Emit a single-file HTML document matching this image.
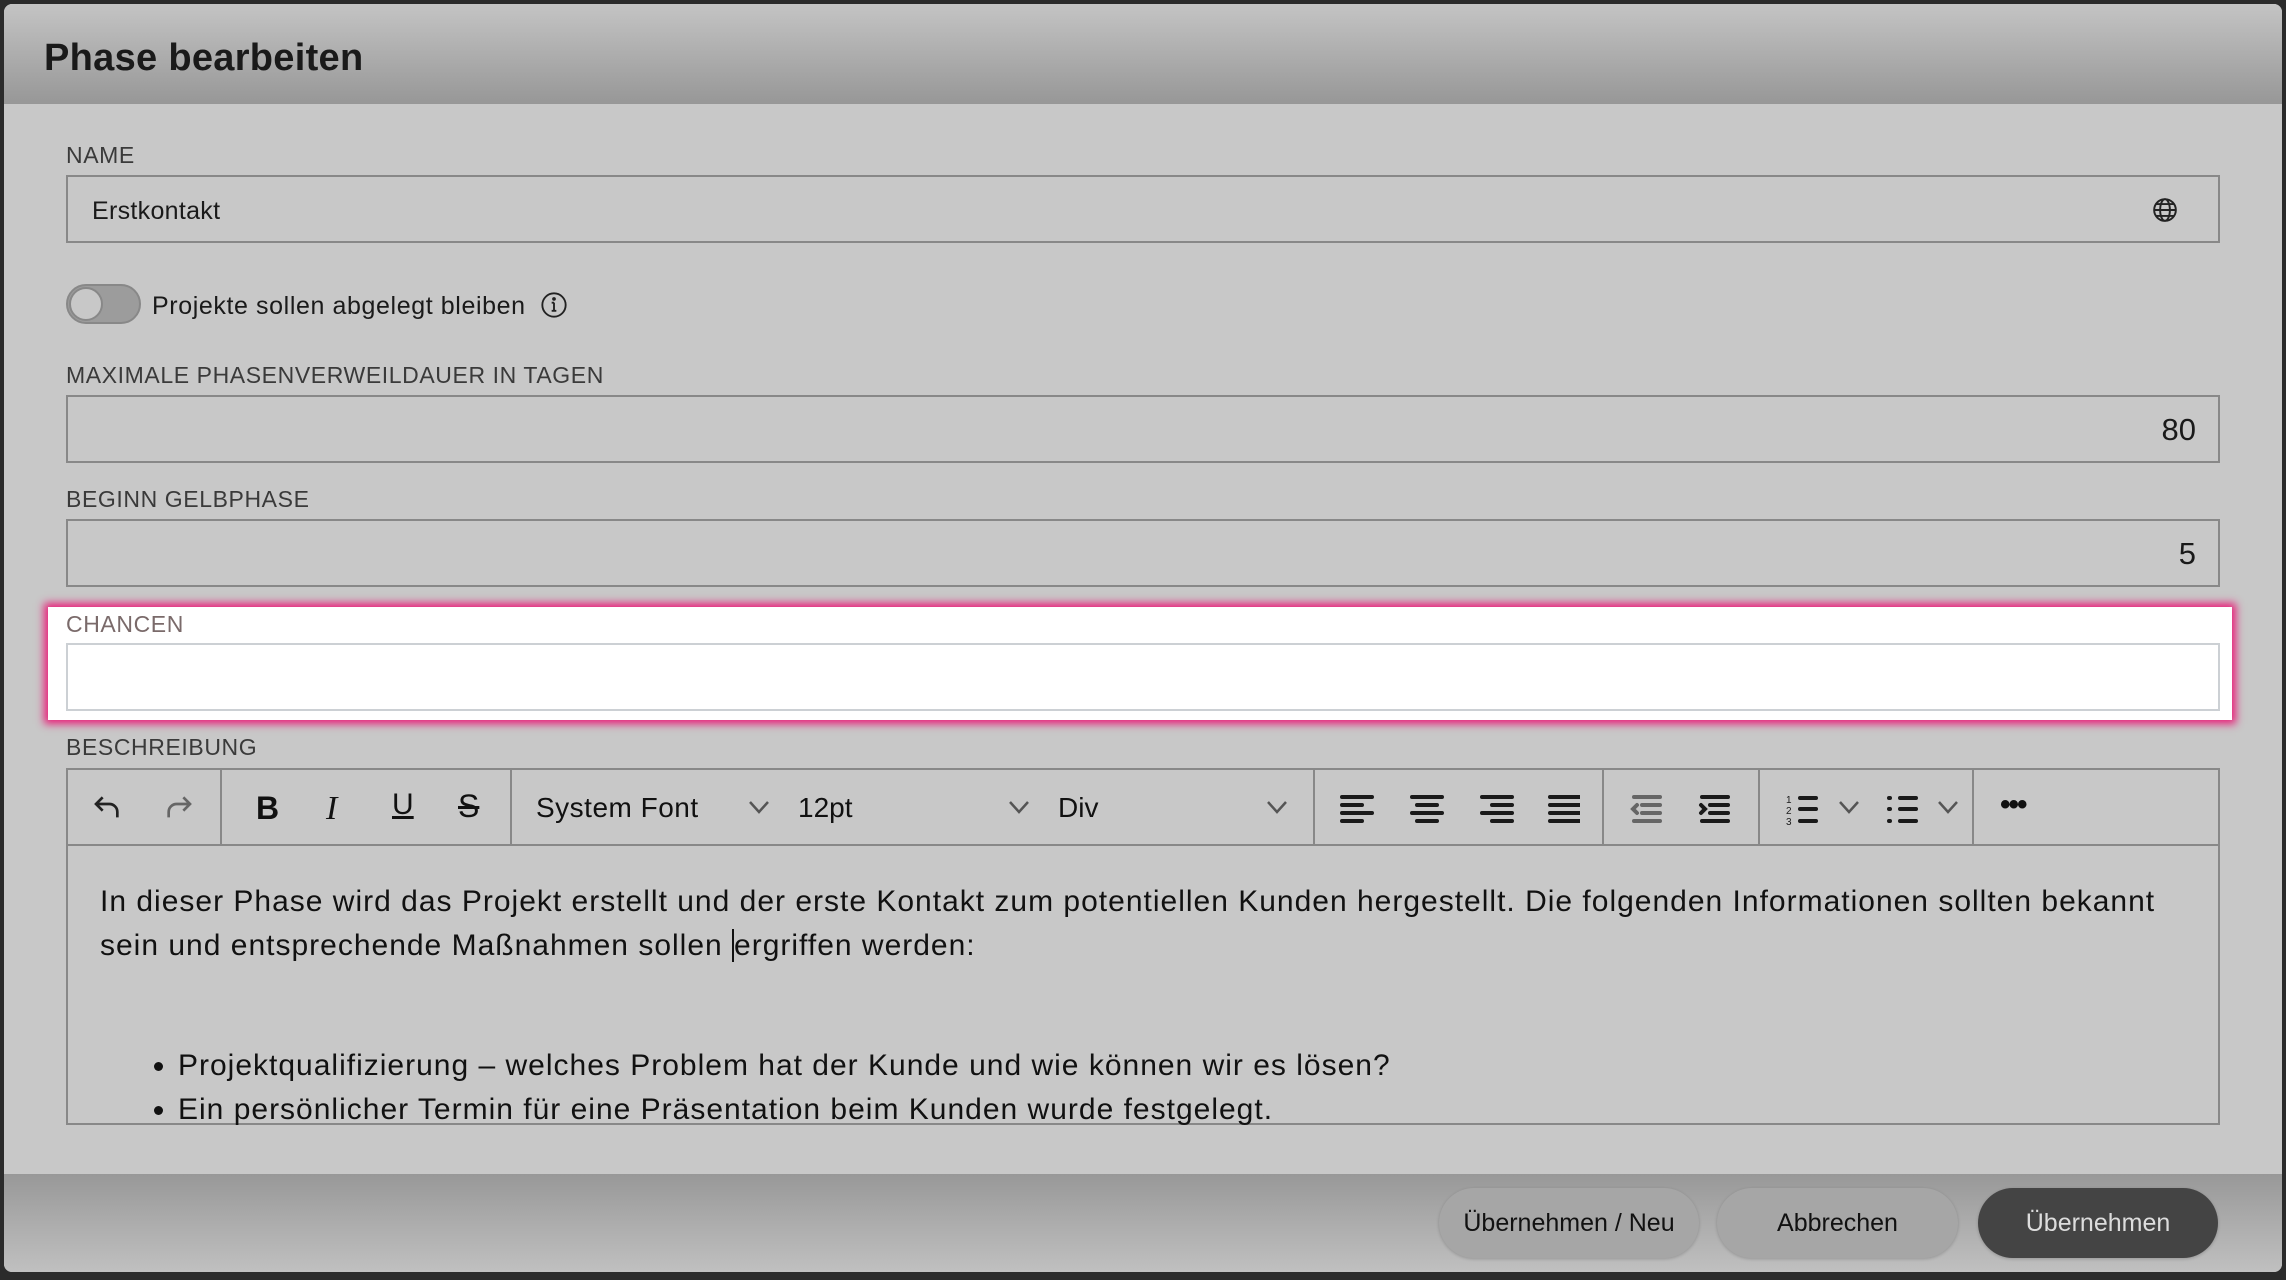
<!DOCTYPE html>
<html><head><meta charset="utf-8"><style>
*{box-sizing:border-box;margin:0;padding:0}
body{width:2286px;height:1280px;background:#2b2b2b;font-family:"Liberation Sans",sans-serif;position:relative;overflow:hidden;color:#1a1a1a}
.modal{position:absolute;left:4px;top:4px;width:2278px;height:1268px;background:#c8c8c8;border-radius:8px;overflow:hidden}
.hdr{position:absolute;left:0;top:0;right:0;height:100px;background:linear-gradient(#c4c4c4,#979797)}
.hdr h1{position:absolute;left:40px;top:33px;font-size:38px;font-weight:bold;color:#1a1a1a;letter-spacing:0.3px}
.lbl{position:absolute;left:62px;font-size:23px;color:#3a3a3a;letter-spacing:0.6px}
.inp{position:absolute;left:62px;width:2154px;border:2px solid #888;background:#c8c8c8}
.num{position:absolute;right:22px;top:15px;font-size:31px;color:#1a1a1a}
.ftr{position:absolute;left:0;right:0;top:1170px;bottom:0;background:linear-gradient(#989898,#c0c0c0)}
.btn{position:absolute;top:1184px;height:70px;border-radius:35px;background:#a6a6a6;font-size:25px;color:#111;display:flex;align-items:center;justify-content:center;box-shadow:0 1px 3px rgba(0,0,0,.2)}
.sep{position:absolute;top:0;width:2px;height:74px;background:#888}
.ic{position:absolute;top:22px}
.tx{position:absolute;font-size:29px;color:#111}
.chev{position:absolute;top:30px}
</style></head><body>
<div class="modal">
<div class="hdr"><h1>Phase bearbeiten</h1></div>
<div class="lbl" style="top:138px">NAME</div>
<div class="inp" style="top:171px;height:68px"><span style="position:absolute;left:24px;top:20px;font-size:25px;letter-spacing:0.3px">Erstkontakt</span>
<svg style="position:absolute;right:40px;top:20px" width="26" height="26" viewBox="0 0 24 24" fill="none" stroke="#222" stroke-width="1.8"><circle cx="12" cy="12" r="10"/><ellipse cx="12" cy="12" rx="4.5" ry="10"/><path d="M2 12h20M4 6.5h16M4 17.5h16"/></svg></div>
<div style="position:absolute;left:62px;top:280px;width:75px;height:40px;border-radius:20px;background:#9c9c9c;border:2px solid #888"><div style="position:absolute;left:1px;top:1px;width:34px;height:34px;border-radius:50%;background:#c8c8c8;border:2px solid #888"></div></div>
<div style="position:absolute;left:148px;top:288px;font-size:25px;letter-spacing:0.6px">Projekte sollen abgelegt bleiben</div>
<svg style="position:absolute;left:536px;top:287px" width="28" height="28" viewBox="0 0 24 24" fill="none" stroke="#222" stroke-width="1.6"><circle cx="12" cy="12" r="10"/><path d="M12 10v7M10 17h4M10 10h2"/><circle cx="12" cy="6.8" r=".8" fill="#222"/></svg>
<div class="lbl" style="top:358px">MAXIMALE PHASENVERWEILDAUER IN TAGEN</div>
<div class="inp" style="top:391px;height:68px"><span class="num">80</span></div>
<div class="lbl" style="top:482px">BEGINN GELBPHASE</div>
<div class="inp" style="top:515px;height:68px"><span class="num">5</span></div>
<div style="position:absolute;left:44px;top:603px;width:2184px;height:113px;background:#fff;box-shadow:0 0 8px 4px #e8217a"></div>
<div class="lbl" style="top:607px;color:#7a6a6a">CHANCEN</div>
<div class="inp" style="top:639px;height:68px;background:#fff;border-color:#ccd0d4"></div>
<div class="lbl" style="top:730px">BESCHREIBUNG</div>
<div class="inp" style="top:764px;height:357px">
 <div style="position:absolute;left:0;right:0;top:74px;height:2px;background:#888"></div>
 <svg class="ic" style="left:22px" width="36" height="32" viewBox="0 0 24 24" fill="none" stroke="#222" stroke-width="2"><path d="M8 4L3 9l5 5M3 9h10a6 6 0 0 1 6 6v4"/></svg>
 <svg class="ic" style="left:92px" width="36" height="32" viewBox="0 0 24 24" fill="none" stroke="#666" stroke-width="2"><path d="M16 4l5 5-5 5M21 9H11a6 6 0 0 0-6 6v4"/></svg>
 <div class="sep" style="left:152px"></div>
 <div class="tx" style="left:188px;top:20px;font-weight:bold;font-size:32px">B</div>
 <div class="tx" style="left:258px;top:20px;font-style:italic;font-family:'Liberation Serif',serif;font-size:34px">I</div>
 <div class="tx" style="left:324px;top:18px;text-decoration:underline;font-size:30px">U</div>
 <div class="tx" style="left:390px;top:18px;text-decoration:line-through;font-size:32px">S</div>
 <div class="sep" style="left:442px"></div>
 <div class="tx" style="left:468px;top:22px;font-size:28px;letter-spacing:0.5px">System Font</div>
 <svg class="chev" style="left:680px" width="22" height="14" viewBox="0 0 22 14" fill="none" stroke="#555" stroke-width="2.5"><path d="M2 2l9 10 9-10"/></svg>
 <div class="tx" style="left:730px;top:22px;font-size:28px">12pt</div>
 <svg class="chev" style="left:940px" width="22" height="14" viewBox="0 0 22 14" fill="none" stroke="#555" stroke-width="2.5"><path d="M2 2l9 10 9-10"/></svg>
 <div class="tx" style="left:990px;top:22px;font-size:28px">Div</div>
 <svg class="chev" style="left:1198px" width="22" height="14" viewBox="0 0 22 14" fill="none" stroke="#555" stroke-width="2.5"><path d="M2 2l9 10 9-10"/></svg>
 <div class="sep" style="left:1245px"></div>
 <svg class="ic" style="left:1272px;top:24px" width="240" height="30" viewBox="0 0 240 30" stroke="#1a1a1a" stroke-width="4" stroke-linecap="round"><path d="M2 3h30M2 11h20M2 19h30M2 27h20"/><path d="M72 3h30M77 11h20M72 19h30M77 27h20"/><path d="M142 3h30M152 11h20M142 19h30M152 27h20"/><path d="M210 3h30M210 11h30M210 19h30M210 27h30"/></svg>
 <div class="sep" style="left:1534px"></div>
 <svg class="ic" style="left:1562px;top:24px" width="110" height="30" viewBox="0 0 110 30" stroke-width="4" stroke-linecap="round"><g stroke="#666"><path d="M4 3h26M12 11h18M12 19h18M4 27h26M7 11l-4 4 4 4" fill="none"/></g><g stroke="#1a1a1a"><path d="M72 3h26M80 11h18M80 19h18M72 27h26M71 11l4 4-4 4" fill="none"/></g></svg>
 <div class="sep" style="left:1690px"></div>
 <svg class="ic" style="left:1718px;top:24px" width="40" height="32" viewBox="0 0 40 32" stroke="#1a1a1a" stroke-width="4" stroke-linecap="round"><path d="M14 4h16M14 15h16M14 27h16"/><text x="0" y="9" font-size="10" fill="#1a1a1a" stroke="none">1</text><text x="0" y="20" font-size="10" fill="#1a1a1a" stroke="none">2</text><text x="0" y="31" font-size="10" fill="#1a1a1a" stroke="none">3</text></svg>
 <svg class="chev" style="left:1770px" width="22" height="14" viewBox="0 0 22 14" fill="none" stroke="#555" stroke-width="2.5"><path d="M2 2l9 10 9-10"/></svg>
 <svg class="ic" style="left:1818px;top:24px" width="40" height="32" viewBox="0 0 40 32" stroke="#1a1a1a" stroke-width="4" stroke-linecap="round"><path d="M14 4h16M14 15h16M14 27h16M3 4h1M3 15h1M3 27h1"/></svg>
 <svg class="chev" style="left:1869px" width="22" height="14" viewBox="0 0 22 14" fill="none" stroke="#555" stroke-width="2.5"><path d="M2 2l9 10 9-10"/></svg>
 <div class="sep" style="left:1904px"></div>
 <div class="tx" style="left:1932px;top:18px;font-size:30px;font-weight:bold;letter-spacing:-2px">•••</div>
 <div style="position:absolute;left:32px;top:110px;right:30px;font-size:30px;letter-spacing:1px;line-height:44px;color:#111">In dieser Phase wird das Projekt erstellt und der erste Kontakt zum potentiellen Kunden hergestellt. Die folgenden Informationen sollten bekannt sein und entsprechende Maßnahmen sollen <span style="border-left:2px solid #111">ergriffen</span> werden:</div>
 <ul style="position:absolute;left:80px;top:274px;font-size:30px;letter-spacing:1px;line-height:44px;color:#111;padding-left:30px">
 <li>Projektqualifizierung – welches Problem hat der Kunde und wie können wir es lösen?</li>
 <li>Ein persönlicher Termin für eine Präsentation beim Kunden wurde festgelegt.</li></ul>
</div>
<div class="ftr"></div>
<div class="btn" style="left:1435px;width:260px">Übernehmen / Neu</div>
<div class="btn" style="left:1713px;width:241px">Abbrechen</div>
<div class="btn" style="left:1974px;width:240px;background:#444;color:#ddd">Übernehmen</div>
</div>
</body></html>
